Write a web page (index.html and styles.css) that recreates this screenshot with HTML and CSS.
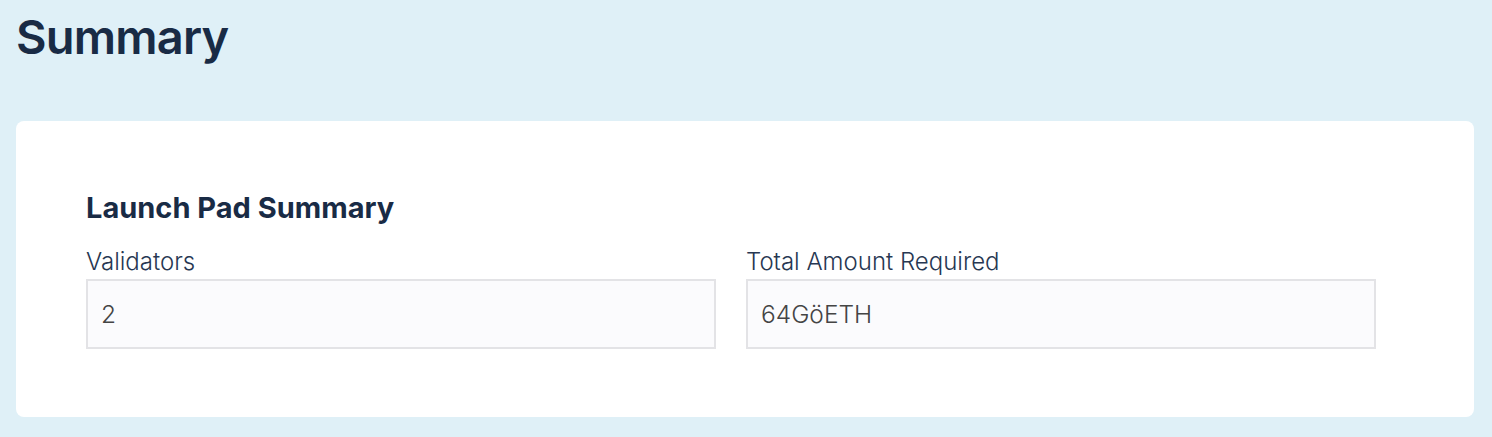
FILE: index.html
```html
<!DOCTYPE html>
<html lang="en">
<head>
<meta charset="utf-8">
<title>Summary</title>
<link rel="stylesheet" href="styles.css">
</head>
<body>
<main class="page">
  <h1 class="page-title">Summary</h1>
  <section class="card">
    <h2 class="card-title">Launch Pad Summary</h2>
    <div class="fields">
      <div class="field">
        <label class="field-label">Validators</label>
        <div class="field-box">2</div>
      </div>
      <div class="field">
        <label class="field-label">Total Amount Required</label>
        <div class="field-box">64GöETH</div>
      </div>
    </div>
  </section>
</main>
</body>
</html>
```
FILE: styles.css
```css
* { box-sizing: border-box; }
html, body {
  margin: 0;
  padding: 0;
  background: #dff0f7;
}
body {
  font-family: Inter, "Noto Sans", sans-serif;
  color: #1a2c47;
}
.page {
  padding: 0 18px 20px 16px;
}
.page-title {
  margin: 0;
  padding-top: 8px;
  font-size: 47px;
  line-height: 58px;
  font-weight: 600;
  letter-spacing: -0.8px;
  color: #192b45;
}
.card {
  margin-top: 55px;
  background: #ffffff;
  border-radius: 8px;
  height: 296px;
  padding: 70px 70px 0 70px;
}
.card-title {
  margin: 0;
  font-size: 29px;
  line-height: 34px;
  font-weight: 700;
  color: #192b45;
}
.fields {
  margin-top: 22px;
  display: grid;
  grid-template-columns: 630px 630px;
  column-gap: 30px;
}
.field-label {
  display: block;
  font-size: 24px;
  line-height: 30px;
  font-weight: 300;
  color: #273752;
}
.field-box {
  margin-top: 2px;
  height: 70px;
  background: #fbfbfd;
  border: 2px solid #e3e3e6;
  padding: 0 13px;
  display: flex;
  align-items: center;
  font-size: 24.5px;
  font-weight: 300;
  color: #444444;
}
```
